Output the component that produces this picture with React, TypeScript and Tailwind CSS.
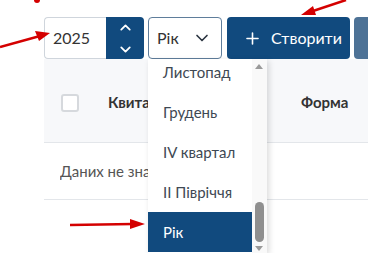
import { Plus, ChevronUp, ChevronDown } from "lucide-react";

const items = ["Листопад", "Грудень", "IV квартал", "II Півріччя", "Рік"];

export default function App() {
  return (
    <div
      className="relative h-[253px] w-[368px] overflow-hidden bg-white text-[#333]"
      style={{ fontFamily: "Lato, 'Noto Sans', sans-serif" }}
    >
      <div className="pl-[44px] pt-[17px]">
        {/* toolbar */}
        <div className="flex h-[42px] w-[360px] items-stretch">
          <div className="flex w-[100px] shrink-0">
            <div className="flex w-[62px] items-center rounded-l border border-r-0 border-[#cfd5dc] pl-[8px] text-[16px] text-[#333]">
              2025
            </div>
            <div className="flex w-[38px] flex-col items-center justify-center gap-[5px] rounded-r bg-[#114a7e] text-white">
              <ChevronUp size={17} strokeWidth={2.5} />
              <ChevronDown size={17} strokeWidth={2.5} />
            </div>
          </div>
          <div className="ml-[4px] flex w-[74px] shrink-0 items-center justify-between rounded border border-[#5f7d9b] pl-[8px] pr-[9px] text-[16px] text-[#333]">
            <span>Рік</span>
            <ChevronDown size={20} strokeWidth={2} className="text-[#2b3440]" />
          </div>
          <button className="ml-[5px] flex w-[123px] shrink-0 items-center gap-[9px] rounded bg-[#114a7e] pl-[16px] text-[16px] text-white">
            <Plus size={19} strokeWidth={2} />
            <span>Створити</span>
          </button>
          <div className="ml-[4px] w-[40px] shrink-0 rounded bg-[#4d7296]" />
        </div>

        {/* table */}
        <div className="w-[330px]">
          <div className="flex h-[84px] items-center border-b border-[#e3e6ea] bg-[#f7f8fa] pt-[4px]">
            <div className="ml-[17px] h-[18px] w-[18px] shrink-0 rounded-[3px] border-2 border-[#d6d9dd] bg-white" />
            <span className="ml-[29px] w-[193px] shrink-0 text-[15px] font-bold text-[#333]">
              <span className="block w-[40px] overflow-hidden whitespace-nowrap">Квитанція</span>
            </span>
            <span className="text-[15px] font-bold text-[#333]">Форма</span>
          </div>
          <div className="flex h-[57px] items-center border-b border-[#e3e6ea] pl-[16px] text-[15px] text-[#555]">
            <span className="block w-[88px] overflow-hidden whitespace-nowrap">Даних не знайдено</span>
          </div>
        </div>
      </div>

      {/* dropdown */}
      <div className="absolute left-[148px] top-[59px] flex h-[194px] w-[119px] bg-white shadow-[2px_2px_6px_rgba(0,0,0,0.15)]">
        <div className="w-[104px] overflow-hidden">
          <div className="-mt-[7px]">
            {items.map((it) => (
              <div
                key={it}
                className={
                  it === "Рік"
                    ? "flex h-[40px] items-center bg-[#114a7e] pl-[15px] text-[15px] text-white"
                    : "flex h-[40px] items-center pl-[15px] text-[15px] text-[#3e4853]"
                }
              >
                {it}
              </div>
            ))}
          </div>
        </div>
        <div className="relative w-[15px] bg-[#f9f9f9]">
          <div className="absolute left-[3px] top-[5px] h-0 w-0 border-x-[4px] border-b-[5px] border-x-transparent border-b-[#9a9a9a]" />
          <div className="absolute left-[3px] top-[143px] h-[40px] w-[9px] rounded-full bg-[#8f8f8f]" />
          <div className="absolute left-[3px] top-[187px] h-0 w-0 border-x-[4px] border-t-[5px] border-x-transparent border-t-[#9a9a9a]" />
        </div>
      </div>

      {/* annotation arrows */}
      <svg className="pointer-events-none absolute left-0 top-0" width="368" height="253">
        <g fill="#d40000" stroke="#d40000">
          <circle cx="37" cy="0" r="3" stroke="none" />
          <line x1="0" y1="47" x2="40" y2="36" strokeWidth="2.5" />
          <polygon points="50,33 35,31 39,41" stroke="none" />
          <line x1="346" y1="0" x2="310" y2="12" strokeWidth="2.5" />
          <polygon points="301,15 313,6 316,15" stroke="none" />
          <line x1="70" y1="225" x2="133" y2="224" strokeWidth="2.5" />
          <polygon points="145,224 130,219 130,229" stroke="none" />
        </g>
      </svg>
    </div>
  );
}
